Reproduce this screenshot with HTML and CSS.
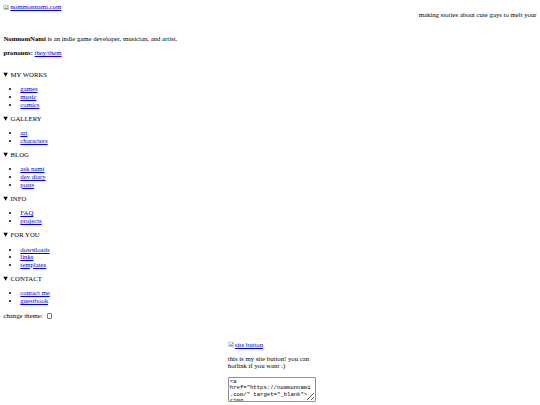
FILE: index.html
```html
<!DOCTYPE html>
<html lang="en">
<head>
<meta charset="utf-8">
<title>NomnomNami</title>
<link rel="stylesheet" href="styles.css">
</head>
<body>
<header class="header">
  <a class="img-link" href="#"><svg class="broken" viewBox="0 0 16 16" aria-hidden="true"><path d="M1.5 2.5h11l2 2v9h-13z" fill="#eef3f8" stroke="#7d8a99"/><path d="M3 12l3.5-4.5 2.5 3 1.5-1.5 2.5 3z" fill="#5aa55a"/><circle cx="11" cy="6" r="1.5" fill="#6b9bd6"/></svg>nommonnami.com</a>
  <div class="tagline">making stories about cute gays to melt your</div>
</header>

<p><b>NomnomNami</b> is an indie game developer, musician, and artist.</p>
<p><b>pronouns:</b> <a href="#">they/them</a></p>

<nav class="menu">
  <details open>
    <summary>MY WORKS</summary>
    <ul>
      <li><a href="#">games</a></li>
      <li><a href="#">music</a></li>
      <li><a href="#">comics</a></li>
    </ul>
  </details>
  <details open>
    <summary>GALLERY</summary>
    <ul>
      <li><a href="#">art</a></li>
      <li><a href="#">characters</a></li>
    </ul>
  </details>
  <details open>
    <summary>BLOG</summary>
    <ul>
      <li><a href="#">ask nami</a></li>
      <li><a href="#">dev diary</a></li>
      <li><a href="#">posts</a></li>
    </ul>
  </details>
  <details open>
    <summary>INFO</summary>
    <ul>
      <li><a href="#">FAQ</a></li>
      <li><a href="#">projects</a></li>
    </ul>
  </details>
  <details open>
    <summary>FOR YOU</summary>
    <ul>
      <li><a href="#">downloads</a></li>
      <li><a href="#">links</a></li>
      <li><a href="#">templates</a></li>
    </ul>
  </details>
  <details open>
    <summary>CONTACT</summary>
    <ul>
      <li><a href="#">contact me</a></li>
      <li><a href="#">guestbook</a></li>
    </ul>
  </details>
</nav>

<p class="theme"><label for="theme-toggle">change theme:</label> <input type="checkbox" id="theme-toggle"></p>

<div class="button-box">
  <a class="img-link" href="#"><svg class="broken" viewBox="0 0 16 16" aria-hidden="true"><path d="M1.5 2.5h11l2 2v9h-13z" fill="#eef3f8" stroke="#7d8a99"/><path d="M3 12l3.5-4.5 2.5 3 1.5-1.5 2.5 3z" fill="#5aa55a"/><circle cx="11" cy="6" r="1.5" fill="#6b9bd6"/></svg>site button</a>
  <p>this is my site button! you can hotlink if you want :)</p>
  <textarea class="code-box" readonly>&lt;a href="https://nommonnami.com/" target="_blank"&gt;&lt;img src="https://nommonnami.com/button.gif" alt="NomnomNami"&gt;&lt;/a&gt;</textarea>
</div>
</body>
</html>
```

FILE: styles.css
```css
/* small-print personal homepage: everything sized for a compact window */
body {
  margin: 3.4px;
  font-family: "Liberation Serif", "Times New Roman", serif;
  font-size: 6.75px;
  line-height: 7.65px;
  color: #000;
  background: #fff;
}

p {
  margin: 6.65px 0;
}

ul {
  margin: 6.65px 0;
  padding-left: 16.9px;
}

a {
  color: #0000ee;
}

.img-link .broken {
  width: 6.5px;
  height: 6.5px;
  vertical-align: -1px;
  margin-right: 0.5px;
}

.header {
  margin-bottom: 16px;
}

/* tagline runs along the right edge of the header */
.tagline {
  white-space: nowrap;
  text-align: right;
}

.menu {
  margin-top: 14.3px;
}

.theme {
  display: flex;
  align-items: center;
  gap: 3px;
  margin-top: 7.4px;
}

.theme input {
  appearance: none;
  width: 5.5px;
  height: 5.5px;
  margin: 0 0 0 1px;
  border: 1px solid #767676;
  border-radius: 1px;
  background: #fff;
}

.button-box {
  width: 84.4px;
  margin: 20.7px auto 0;
}

.code-box {
  display: block;
  box-sizing: border-box;
  width: 88px;
  height: 25.5px;
  padding: 1px;
  border: 1px solid #8f8f8f;
  border-radius: 1px;
  font-family: "Liberation Mono", "DejaVu Sans Mono", monospace;
  font-size: 5.625px;
  line-height: 6.5px;
  overflow: hidden;
  resize: both;
  color: #000;
}
```
